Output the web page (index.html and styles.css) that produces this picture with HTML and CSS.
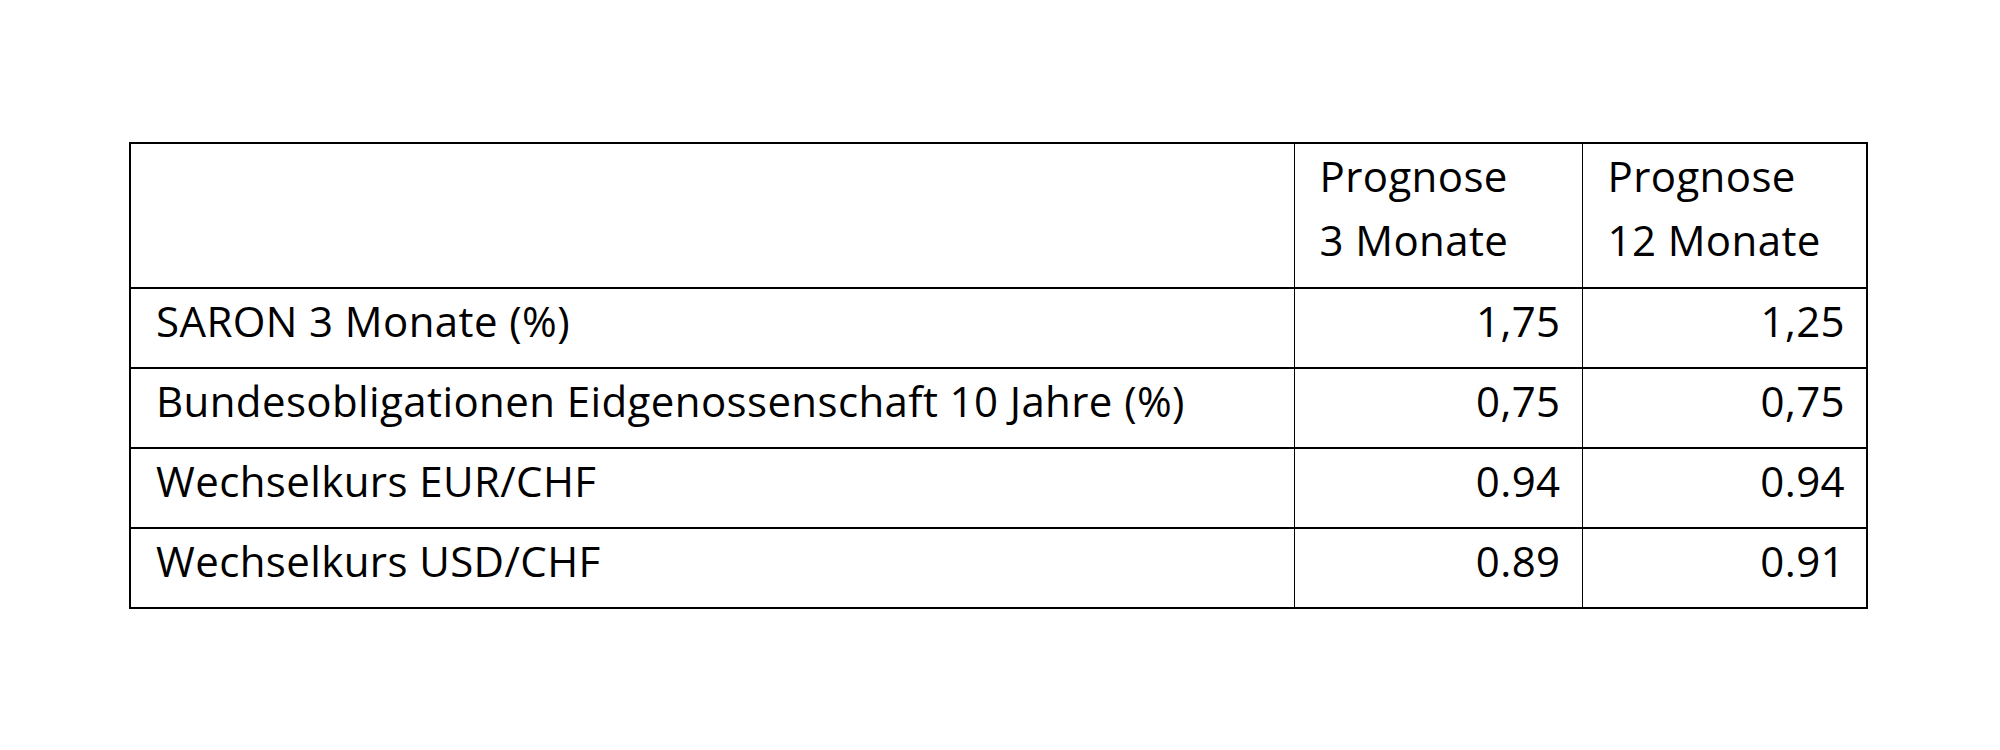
FILE: index.html
```html
<!DOCTYPE html>
<html lang="de">
<head>
<meta charset="utf-8">
<title>Prognose</title>
<link rel="stylesheet" href="styles.css">
</head>
<body>
<main class="page">
  <table class="forecast">
    <colgroup>
      <col class="c-label">
      <col class="c-val">
      <col class="c-val2">
    </colgroup>
    <thead>
      <tr class="head-row">
        <th class="label"></th>
        <th class="head">Prognose<br>3 Monate</th>
        <th class="head">Prognose<br>12 Monate</th>
      </tr>
    </thead>
    <tbody>
      <tr class="data-row">
        <td class="label">SARON 3 Monate (%)</td>
        <td class="num">1,75</td>
        <td class="num">1,25</td>
      </tr>
      <tr class="data-row">
        <td class="label">Bundesobligationen Eidgenossenschaft 10 Jahre (%)</td>
        <td class="num">0,75</td>
        <td class="num">0,75</td>
      </tr>
      <tr class="data-row">
        <td class="label">Wechselkurs EUR/CHF</td>
        <td class="num">0.94</td>
        <td class="num">0.94</td>
      </tr>
      <tr class="data-row">
        <td class="label">Wechselkurs USD/CHF</td>
        <td class="num">0.89</td>
        <td class="num">0.91</td>
      </tr>
    </tbody>
  </table>
</main>
</body>
</html>
```

FILE: styles.css
```css
html, body {
  margin: 0;
  padding: 0;
  background: #ffffff;
}

.page {
  padding: 142px 0 0 129px;
}

.forecast {
  border-collapse: collapse;
  table-layout: fixed;
  width: 1737px;
  font-family: "Open Sans", Lato, sans-serif;
  font-size: 42px;
  letter-spacing: 0.4px;
  line-height: 64px;
  color: #000000;
  border-left: 2px solid #000;
  border-right: 2px solid #000;
}

.c-label { width: 1164px; }
.c-val { width: 288px; }
.c-val2 { width: 285px; }

.forecast th,
.forecast td {
  padding: 0 21px 0 25px;
  vertical-align: top;
  font-weight: 400;
  text-align: left;
  border-top: 2px solid #000;
  border-bottom: 2px solid #000;
  border-left: 1px solid #000;
  border-right: 1px solid #000;
  white-space: nowrap;
}

.forecast .label {
  border-left: 2px solid #000;
}

.forecast tr > :last-child {
  border-right: 2px solid #000;
}

.head-row { height: 145px; }
.data-row { height: 80px; }

.forecast .num {
  text-align: right;
}
```
